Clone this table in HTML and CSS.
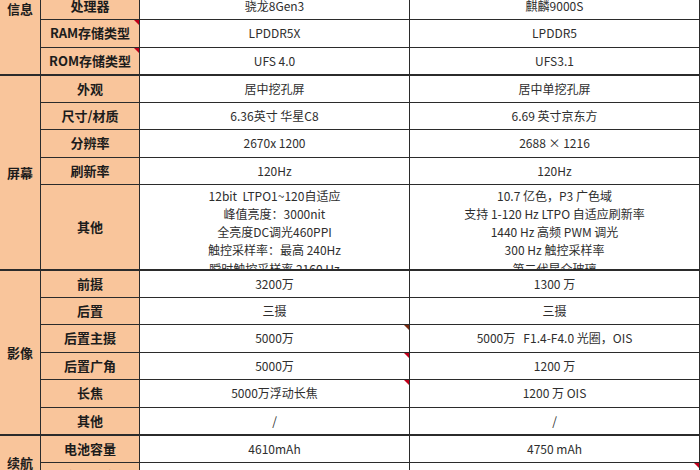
FILE: index.html
```html
<!DOCTYPE html>
<html lang="zh-CN">
<head>
<meta charset="utf-8">
<title>参数对比</title>
<link rel="stylesheet" href="styles.css">
</head>
<body>
<div class="frame">
  <div class="sheet">
    <!-- 基本信息 -->
    <div class="sec-label top-label" style="grid-row: span 3">信息</div>
    <div class="key">处理器</div>
    <div class="val">骁龙8Gen3</div>
    <div class="val last">麒麟9000S</div>

    <div class="key note">RAM存储类型</div>
    <div class="val">LPDDR5X</div>
    <div class="val last">LPDDR5</div>

    <div class="key note">ROM存储类型</div>
    <div class="val">UFS 4.0</div>
    <div class="val last">UFS3.1</div>

    <!-- 屏幕 -->
    <div class="sec-label sec" style="grid-row: span 5">屏幕</div>
    <div class="key sec">外观</div>
    <div class="val sec">居中挖孔屏</div>
    <div class="val last sec">居中单挖孔屏</div>

    <div class="key">尺寸/材质</div>
    <div class="val">6.36英寸 华星C8</div>
    <div class="val last">6.69 英寸京东方</div>

    <div class="key">分辨率</div>
    <div class="val">2670x 1200</div>
    <div class="val last">2688 × 1216</div>

    <div class="key">刷新率</div>
    <div class="val">120Hz</div>
    <div class="val last">120Hz</div>

    <div class="key">其他</div>
    <div class="val multi">
      <span>12bit&nbsp; LTPO1~120自适应</span>
      <span>峰值亮度：3000nit</span>
      <span>全亮度DC调光460PPI</span>
      <span>触控采样率：最高 240Hz</span>
      <span>瞬时触控采样率 2160 Hz</span>
    </div>
    <div class="val last multi">
      <span>10.7 亿色，P3 广色域</span>
      <span>支持 1-120 Hz LTPO 自适应刷新率</span>
      <span>1440 Hz 高频 PWM 调光</span>
      <span>300 Hz 触控采样率</span>
      <span>第二代昆仑玻璃</span>
    </div>

    <!-- 影像 -->
    <div class="sec-label sec" style="grid-row: span 6">影像</div>
    <div class="key sec">前摄</div>
    <div class="val sec">3200万</div>
    <div class="val last sec">1300 万</div>

    <div class="key">后置</div>
    <div class="val">三摄</div>
    <div class="val last">三摄</div>

    <div class="key">后置主摄</div>
    <div class="val note note-dark">5000万</div>
    <div class="val last">5000万&nbsp;&nbsp; F1.4-F4.0 光圈，OIS</div>

    <div class="key">后置广角</div>
    <div class="val note">5000万</div>
    <div class="val last">1200 万</div>

    <div class="key">长焦</div>
    <div class="val note">5000万浮动长焦</div>
    <div class="val last">1200 万 OIS</div>

    <div class="key">其他</div>
    <div class="val">/</div>
    <div class="val last">/</div>

    <!-- 续航 -->
    <div class="sec-label sec" style="grid-row: span 2">续航</div>
    <div class="key sec">电池容量</div>
    <div class="val sec">4610mAh</div>
    <div class="val last sec">4750 mAh</div>

    <div class="key">充电功率</div>
    <div class="val">90W有线</div>
    <div class="val last note">88W 有线</div>
  </div>
</div>
</body>
</html>
```

FILE: styles.css
```css
html, body {
  margin: 0;
  padding: 0;
  background: #ffffff;
}

.frame {
  width: 700px;
  height: 470px;
  overflow: hidden;
}

.sheet {
  display: grid;
  grid-template-columns: 41px 99px 270px 290px;
  grid-template-rows: repeat(7, 27.5px) 85px repeat(8, 27.5px);
  margin-top: -7.5px;
  font-family: "Noto Sans CJK SC", "Noto Sans", sans-serif;
}

.sheet > div {
  box-sizing: border-box;
  border-right: 1px solid #2b2b2b;
  border-bottom: 1px solid #2b2b2b;
  display: flex;
  align-items: center;
  justify-content: center;
  text-align: center;
  white-space: nowrap;
  position: relative;
  overflow: hidden;
}

.sheet > div.sec {
  border-top: 1px solid #2b2b2b;
}

.sec-label,
.key {
  background: #f9c59b;
  color: #1c1c1c;
  font-weight: bold;
  font-size: 13px;
}

.sheet > .top-label {
  align-items: flex-start;
  padding-top: 6px;
  line-height: 19px;
}

.key {
  line-height: 18px;
}

.val {
  background: #ffffff;
  color: #2e2e2e;
  font-size: 12px;
  line-height: 18px;
}

.sheet > .multi {
  flex-direction: column;
  justify-content: flex-start;
  align-items: center;
  padding-top: 1.5px;
  line-height: 18.3px;
}

.sheet > .note {
  overflow: visible;
}

.note::after {
  content: "";
  position: absolute;
  top: 0;
  right: 0;
  width: 0;
  height: 0;
  border-top: 5px solid #c0001a;
  border-left: 5px solid transparent;
}

.note-dark::after {
  border-top-color: #7a2a10;
}
```
